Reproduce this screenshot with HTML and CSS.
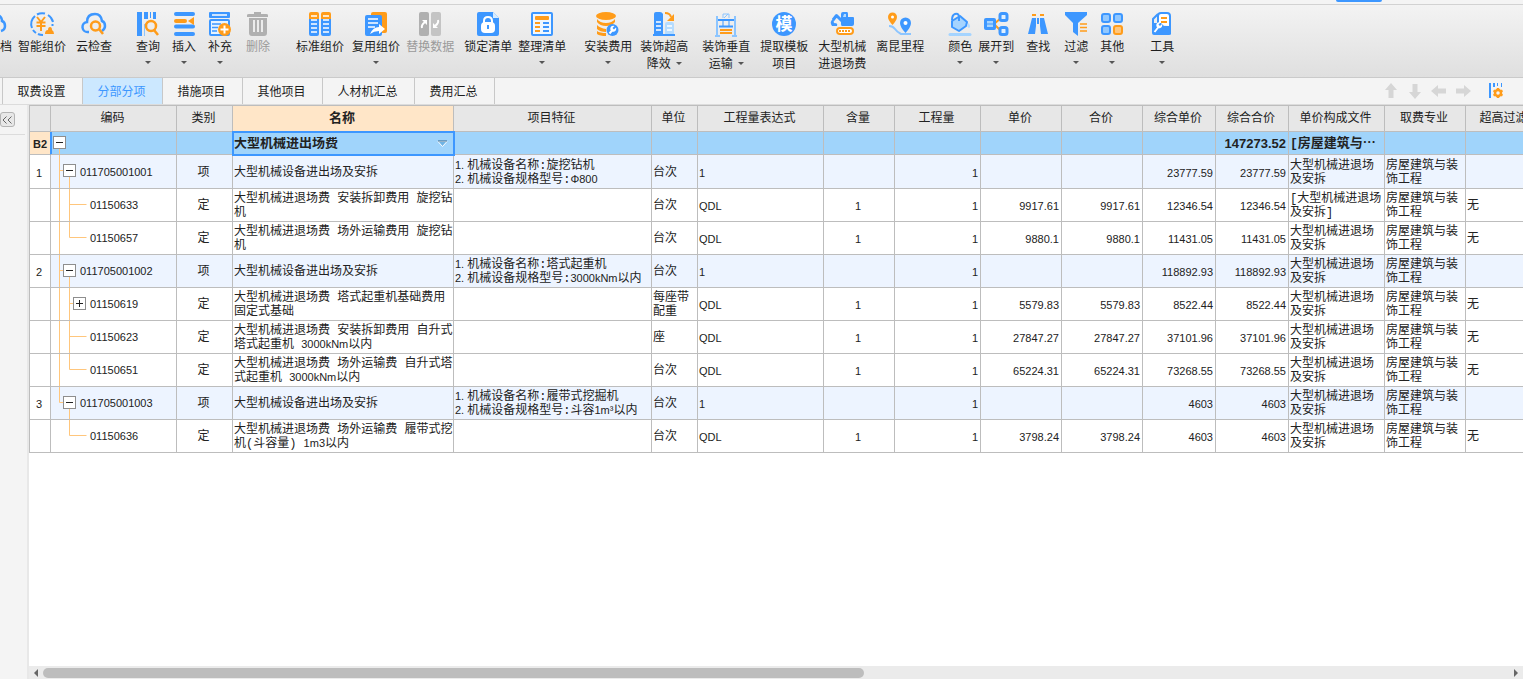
FILE: index.html
```html
<!DOCTYPE html>
<html lang="zh-CN">
<head>
<meta charset="utf-8">
<title>分部分项</title>
<link rel="stylesheet" href="styles.css">
</head>
<body>
<svg class="defs" aria-hidden="true">
  <defs>
    <g id="minus"><rect x=".5" y=".5" width="12" height="12" fill="#fff" stroke="#8e8e8e"/><path d="M3 6.5h7" stroke="#222"/></g>
    <g id="plus"><use href="#minus"/><path d="M6.500 3v7" stroke="#222"/></g>
    <g id="t-root"><path d="M8.500 16v30" class="twig"/><use href="#minus" x="2" y="4"/></g>
    <g id="t-item"><path d="M8.500 0v40M8.500 15.500h5M18.500 20v20" class="twig"/><use href="#minus" x="12" y="9"/></g>
    <g id="t-last"><path d="M8.500 0v15.500h5M18.500 20v20" class="twig"/><use href="#minus" x="12" y="9"/></g>
    <g id="t-mid"><path d="M8.500 0v40M18.500 0v40M18.500 15.500h17" class="twig"/></g>
    <g id="t-end"><path d="M8.500 0v40M18.500 0v15.500h17" class="twig"/></g>
    <g id="t-plus"><path d="M8.500 0v40M18.500 0v40M18.500 15.500h5" class="twig"/><use href="#plus" x="22" y="9"/></g>
    <g id="t-final"><path d="M18.500 0v15.500h17" class="twig"/></g>
  </defs>
</svg>

<div class="topstrip"><span class="pill"></span></div>

<div class="toolbar" role="toolbar">
  <button class="tool clip"><svg class="ico" viewBox="18 0 12 24"><path d="M16 3q4 2 4 6 3 1 3 5t-4 5" fill="none" stroke="#3d97ff" stroke-width="2.500"/></svg>档</button>
  <button class="tool s6"><svg class="ico" viewBox="0 0 24 24"><g fill="none" stroke="#3d97ff" stroke-width="2"><path d="M2 16A11 11 0 0 1 5 4M7 2.500A11 11 0 0 1 15 1.500M18 3a11 11 0 0 1 5 7M3 18a11 11 0 0 0 3 3M8 22q2 1 5 1M22.500 12v2"/></g><path d="M7 5l4 5 4-5M6.500 10.500h9M6.500 14h9M11 10v9" fill="none" stroke="#ff9c1a" stroke-width="2"/><path d="M15 22q0-4 3-4 0-3 2-3t2 3q2 1 2 4z" fill="#ff9c1a"/></svg>智能组价</button>
  <button class="tool s10"><svg class="ico" viewBox="0 0 24 24"><path d="M7 20H6a5 5 0 0 1-1-10q0-8 8-8 6 0 7 7 3 1 3 5 0 3-3 5" fill="none" stroke="#3d97ff" stroke-width="2.500"/><circle cx="13.500" cy="14" r="4.500" fill="none" stroke="#ff9c1a" stroke-width="2.500"/><path d="M17 17l4 5" stroke="#ff9c1a" stroke-width="2.500"/></svg>云检查</button>
  <button class="tool s24"><svg class="ico" viewBox="0 0 24 24"><path d="M1 0h5v24H1zM8 0h4v7H8zM14 0h1v6h-1zM17 0h3v7h-3z" fill="#3d97ff"/><path d="M9 12v12h-1V12z" fill="#8cc5ff"/><circle cx="15" cy="14" r="5" fill="none" stroke="#ff9c1a" stroke-width="2.500"/><path d="M18 18l4 5" stroke="#ff9c1a" stroke-width="2.500"/></svg>查询<i class="caret"></i></button>
  <button class="tool s12"><svg class="ico" viewBox="0 0 24 24"><path d="M4 2h17M4 14.500h17M4 22h17" stroke="#3d97ff" stroke-width="4" stroke-linecap="round"/><path d="M4 9h9" stroke="#ff9c1a" stroke-width="4" stroke-linecap="round"/><path d="M16 9l6-4v8z" fill="#ff9c1a"/></svg>插入<i class="caret"></i></button>
  <button class="tool s12"><svg class="ico" viewBox="0 0 24 24"><rect x="1" width="21" height="6" rx="1" fill="#3d97ff"/><path d="M4 3h15" stroke="#fff" stroke-width="1.500"/><rect x="2" y="8" width="19" height="15" rx="1" fill="#e6f3ff" stroke="#3d97ff" stroke-width="2"/><path d="M4 12h9M4 15.500h6M4 19h5" stroke="#3d97ff" stroke-width="1.500"/><circle cx="16.500" cy="17.500" r="6.500" fill="#ff9c1a"/><path d="M16.500 13.500v8M12.500 17.500h8" stroke="#fff" stroke-width="2"/></svg>补充<i class="caret"></i></button>
  <button class="tool s14" disabled><svg class="ico" viewBox="0 0 24 24"><path d="M1 5V3q0-1 2-1h5V0h7v2h5q2 0 2 1v2zM3 6h18v15q0 3-3 3H6q-3 0-3-3z" fill="#b0b0b0"/><path d="M8 8v12M12 8v12M16 8v12" stroke="#fff" stroke-width="1.500"/></svg>删除</button>

  <button class="tool s26"><svg class="ico" viewBox="0 0 24 24"><path d="M1 2q0-2 2-2h6q2 0 2 2v5H1zM13 2q0-2 2-2h6q2 0 2 2v5H13z" fill="#ff9c1a"/><path d="M1 7h10v15q0 2-2 2H3q-2 0-2-2zM13 7h10v15q0 2-2 2h-6q-2 0-2-2z" fill="#3d97ff"/><path d="M3 4h6M3 8h6M3 12h6M3 16h6M3 20h6M15 4h6M15 8h6M15 12h6M15 16h6M15 20h6" stroke="#fff" stroke-width="1.500"/></svg>标准组价</button>
  <button class="tool s8"><svg class="ico" viewBox="0 0 24 24"><rect x="7" width="16" height="21" rx="2" fill="#ff9c1a"/><rect x="1" y="3" width="17" height="21" rx="2" fill="#3d97ff"/><path d="M4 7h10M4 11h10M4 15h7" stroke="#fff" stroke-width="1.500"/><path d="M6 22q3-7 9-7v-3l6 5-6 5v-3q-5 0-9 3z" fill="#fff"/></svg>复用组价<i class="caret"></i></button>
  <button class="tool s6" disabled><svg class="ico" viewBox="0 0 24 24"><rect x="1" width="10" height="24" rx="2" fill="#b0b0b0"/><rect x="13" width="10" height="24" rx="2" fill="#c4c4c4"/><path d="M4 16q-1-3 3-6M20 8q1 3-3 6" fill="none" stroke="#fff" stroke-width="2"/><path d="M4 8h5v5zM15 11v5h5z" fill="#fff"/></svg>替换数据</button>
  <button class="tool s10"><svg class="ico" viewBox="0 0 24 24"><path d="M1 2q0-2 2-2h14l6 6v16q0 2-2 2H3q-2 0-2-2z" fill="#3d97ff"/><path d="M17 0l6 6h-6z" fill="#d7ecff"/><rect x="5" y="10" width="14" height="11" rx="4" fill="#fff"/><path d="M8 11V9q0-4 4-4t4 4v2" fill="none" stroke="#fff" stroke-width="2"/><path d="M12 13v4" stroke="#3d97ff" stroke-width="2"/></svg>锁定清单</button>
  <button class="tool s6"><svg class="ico" viewBox="0 0 24 24"><rect x="2" y="1" width="20" height="22" rx="1" fill="#eef7ff" stroke="#3d97ff" stroke-width="2"/><rect x="5" y="4" width="14" height="4" rx="1" fill="#ff9c1a"/><path d="M5 11h5M5 15h5M5 19h5" stroke="#ff9c1a" stroke-width="2"/><path d="M13 11h6M13 15h6M13 19h6" stroke="#3d97ff" stroke-width="2"/></svg>整理清单<i class="caret"></i></button>

  <button class="tool s18"><svg class="ico" viewBox="0 0 24 24"><ellipse cx="10" cy="4" rx="10" ry="4" fill="#ff9c1a"/><path d="M1 7q3 4 9 4t9-4v3q-3 4-9 4T1 10zM1 13q3 3 9 4v3q-6 0-9-3zM1 19q3 2 9 2v3q-6 0-9-2z" fill="#ff9c1a"/><circle cx="16.500" cy="18" r="6" fill="#3d97ff"/><path d="M13.500 21.500l3-3.500" stroke="#fff" stroke-width="2"/><path d="M20 15.500l-2 2-1.500-1.500 2-2a3 3 0 1 0 1.500 1.500z" fill="#fff"/></svg>安装费用<i class="caret"></i></button>
  <button class="tool s8"><svg class="ico" viewBox="0 0 24 24"><path d="M2 2q0-2 2-2h4q2 0 3 2v20H2z" fill="#3d97ff"/><path d="M4 10h5M4 14h5M4 18h5" stroke="#fff" stroke-width="1.500"/><path d="M13 12q0-2 2-2h5q2 0 2 2v10h-9z" fill="#b5dcff"/><path d="M15 14h5M15 18h5" stroke="#fff" stroke-width="1.500"/><path d="M1 23h22" stroke="#3d97ff" stroke-width="2"/><path d="M13 1q5 0 6 4" fill="none" stroke="#ff9c1a" stroke-width="2"/><path d="M22 2v7h-7z" fill="#ff9c1a"/></svg><span>装饰超高<br>降效<i class="caret side"></i></span></button>
  <button class="tool s14"><svg class="ico" viewBox="0 0 24 24"><path d="M3 4v19M21 4v19" fill="none" stroke="#8cc5ff" stroke-width="2"/><path d="M9 6V2h6v4M10 6l4-4" fill="none" stroke="#8cc5ff"/><path d="M4 8h16M5 14.500h14" stroke="#3d97ff" stroke-width="2"/><path d="M9 7v8M15 7v8" stroke="#3d97ff"/><path d="M6 18h12M6 21h12" stroke="#ff9c1a" stroke-width="2"/><path d="M1 24h5M18 24h5" stroke="#8cc5ff" stroke-width="2"/></svg><span>装饰垂直<br>运输<i class="caret side"></i></span></button>
  <button class="tool s10"><svg class="ico" viewBox="0 0 24 24"><circle cx="12" cy="12" r="12" fill="#3d97ff"/><text x="12" y="18" text-anchor="middle" class="mo">模</text></svg><span>提取模板<br>项目</span></button>
  <button class="tool s10"><svg class="ico" viewBox="0 0 24 24"><path d="M11 2q0-2 2-2h4q1 0 1 2v3h5q1 0 1 1v6q0 2-2 2H12q-1 0-1-2z" fill="#3d97ff"/><path d="M14 2h2v3h-3z" fill="#b5dcff"/><path d="M12 9L6.500 3.500 3 8" fill="none" stroke="#3d97ff" stroke-width="3" stroke-linejoin="round"/><path d="M3 7q-4 3-1 7h5q1-2-1-3-3 1-2-3z" fill="#3d97ff"/><rect x="7" y="16" width="16" height="6" rx="3" fill="#fff" stroke="#ff9c1a" stroke-width="2"/><path d="M9 19h12" stroke="#ff9c1a" stroke-width="2" stroke-dasharray="2 1"/></svg><span>大型机械<br>进退场费</span></button>
  <button class="tool s10"><svg class="ico" viewBox="0 0 24 24"><path d="M1 14q4 0 6 3t6 5q1 0 3 0h7" fill="none" stroke="#8cc5ff" stroke-width="2"/><path d="M4.500 13Q0 8 0 5a4.500 4.500 0 0 1 9 0q0 3-4.500 8z" fill="#ff9c1a"/><circle cx="4.500" cy="5" r="1.500" fill="#fff"/><path d="M17.500 21Q12 15 12 11a5.500 5.500 0 0 1 11 0q0 4-5.500 10z" fill="#3d97ff"/><circle cx="17.500" cy="11" r="2" fill="#fff"/></svg>离昆里程</button>

  <button class="tool s24"><svg class="ico" viewBox="0 0 24 24"><path d="M4 9l8-5 7 6-1 4-7 5-7-4z" fill="#a5d4ff" stroke="#3d97ff" stroke-width="2" stroke-linejoin="round"/><path d="M11 9V4q-1-3-4-2Q4 3 4 8" fill="none" stroke="#3d97ff" stroke-width="2"/><path d="M20.500 11q3 4 .5 5-3-1-.5-5z" fill="#b5dcff"/><path d="M2 22.500h20" stroke="#a5d4ff" stroke-width="3" stroke-linecap="round"/></svg>颜色<i class="caret"></i></button>
  <button class="tool s6"><svg class="ico" viewBox="0 0 24 24"><path d="M10 12l7-6M10 12l7 7" stroke="#ff9c1a" stroke-width="2"/><rect y="6" width="12" height="12" rx="2" fill="#3d97ff"/><rect x="3" y="9" width="6" height="6" fill="#a5d4ff"/><path d="M3 12h6" stroke="#3d97ff"/><rect x="16" y="1.500" width="7" height="7" rx="2" fill="#e0f0ff" stroke="#3d97ff" stroke-width="3"/><rect x="16" y="15.500" width="7" height="7" rx="2" fill="#e0f0ff" stroke="#3d97ff" stroke-width="3"/></svg>展开到<i class="caret"></i></button>
  <button class="tool s12"><svg class="ico" viewBox="0 0 24 24"><path d="M6 3h4M14 3h4" stroke="#ff9c1a" stroke-width="2"/><path d="M6 6h4v8l-1 8H2l3-12zM14 6h4l1 4 3 12h-7l-1-8z" fill="#3d97ff"/><path d="M11 6h2v6h-2z" fill="#3d97ff"/></svg>查找</button>
  <button class="tool s14"><svg class="ico" viewBox="0 0 24 24"><path d="M1 0h22v3l-9 8v13l-5-4v-9L1 3z" fill="#3d97ff"/><path d="M16 12h7M16 15.500h7M16 19h7" stroke="#ff9c1a" stroke-width="1.500"/></svg>过滤<i class="caret"></i></button>
  <button class="tool s12"><svg class="ico" viewBox="0 0 24 24"><g fill="#91c8ff" stroke="#3d97ff" stroke-width="2"><rect x="2" y="2" width="8" height="8" rx="2"/><rect x="14" y="2" width="8" height="8" rx="2"/><rect x="2" y="14" width="8" height="8" rx="2"/></g><rect x="14" y="14" width="8" height="8" rx="2" fill="#ffc67c" stroke="#ff9c1a" stroke-width="2"/></svg>其他<i class="caret"></i></button>
  <button class="tool s26"><svg class="ico" viewBox="0 0 24 24"><path d="M3 12V7l5-5" stroke="#3d97ff" stroke-width="2" fill="none"/><path d="M8 12V4q0-3 3-3h6q3 0 3 3v10" fill="#fff" stroke="#3d97ff" stroke-width="2"/><path d="M11 6h6M11 10h6" stroke="#ff9c1a" stroke-width="2"/><path d="M2 11h9l3 3h7v8q0 1-2 1H4q-2 0-2-2z" fill="#3d97ff"/><path d="M4.500 20l4-5" stroke="#fff" stroke-width="2"/><path d="M12 12l-2 2-1.500-1.500 2-2a3 3 0 1 0 1.500 1.500z" fill="#fff"/></svg>工具<i class="caret"></i></button>
</div>

<nav class="tabs">
  <button class="tab">取费设置</button><button class="tab active">分部分项</button><button class="tab">措施项目</button><button class="tab">其他项目</button><button class="tab wide">人材机汇总</button><button class="tab">费用汇总</button>
  <div class="moves">
    <button aria-label="上移"><svg width="16" height="16"><path d="M8 0l6 7h-3.500v8h-5V7H2z" fill="#d6d6d6"/></svg></button>
    <button aria-label="下移"><svg width="16" height="16"><path d="M8 16l6-7h-3.500V1h-5v8H2z" fill="#d6d6d6"/></svg></button>
    <button aria-label="左移"><svg width="16" height="16"><path d="M0 8l7-6v3.500h8v5H7V14z" fill="#d6d6d6"/></svg></button>
    <button aria-label="右移"><svg width="16" height="16"><path d="M16 8L9 2v3.500H1v5h8V14z" fill="#d6d6d6"/></svg></button>
    <button class="colset" aria-label="列设置"><svg width="16" height="16"><path d="M1 0h2v15H1zM5 0h2v4H5zM9 0h1v3H9zM13 0h1v4h-1z" fill="#3d97ff"/><circle cx="10" cy="10" r="3" fill="none" stroke="#ff9c1a" stroke-width="2.500"/><path d="M10 5v2M10 13v2M5.500 7.500l2 1M12.500 11.500l2 1M14.500 7.500l-2 1M7.500 11.500l-2 1" stroke="#ff9c1a" stroke-width="2.500"/></svg></button>
  </div>
</nav>

<main class="work">
  <aside class="side-panel"><div class="fold-row"><button class="fold" aria-label="展开侧栏"><svg width="12" height="12"><path d="M5.500 2.500L2 6l3.500 3.500M10.500 2.500L7 6l3.500 3.500" fill="none" stroke="#666"/></svg></button></div></aside>
  <section class="pane">
    <div class="grid">
      <table>
        <colgroup><col class="c21"><col class="c126"><col class="c56"><col class="c221"><col class="c198"><col class="c46"><col class="c126"><col class="c71"><col class="c86"><col class="c81"><col class="c81"><col class="c73"><col class="c73"><col class="c96"><col class="c81"><col class="c102"></colgroup>
        <thead><tr><th></th><th>编码</th><th>类别</th><th class="cur">名称</th><th>项目特征</th><th>单位</th><th>工程量表达式</th><th>含量</th><th>工程量</th><th>单价</th><th>合价</th><th>综合单价</th><th>综合合价</th><th>单价构成文件</th><th>取费专业</th><th>超高过滤类别</th></tr></thead>
        <tbody>
          <tr class="root"><td class="mid rowmark"><b class="n">B2</b></td><td class="code"><div><button class="toggle" aria-label="折叠"><svg class="tree"><use href="#t-root"/></svg></button></div></td><td></td><td class="picked"><div class="combo"><select aria-label="名称"><option>大型机械进出场费</option></select><svg width="11" height="8"><path d="M1 1.500h9L5.500 6.500z" fill="#6fb3e4" stroke="#fff"/><path d="M1 1h9" stroke="#2f6690"/></svg></div></td><td></td><td></td><td></td><td></td><td></td><td></td><td></td><td></td><td class="num">147273.52</td><td>[房屋建筑与⋯</td><td></td><td></td></tr>
          <tr class="item tall"><td class="mid n">1</td><td class="code n"><div><button class="toggle" aria-label="折叠"><svg class="tree"><use href="#t-item"/></svg></button>011705001001</div></td><td class="mid">项</td><td>大型机械设备进出场及安拆</td><td><span class="n">1. </span>机械设备名称:旋挖钻机<br><span class="n">2. </span>机械设备规格型号:<span class="n">Φ800</span></td><td>台次</td><td class="n">1</td><td></td><td class="num">1</td><td></td><td></td><td class="num">23777.59</td><td class="num">23777.59</td><td>大型机械进退场<br>及安拆</td><td>房屋建筑与装<br>饰工程</td><td></td></tr>
          <tr><td></td><td class="code n"><div><svg class="tree deep"><use href="#t-mid"/></svg>01150633</div></td><td class="mid">定</td><td>大型机械进退场费 安装拆卸费用 旋挖钻<br>机</td><td></td><td>台次</td><td class="n">QDL</td><td class="mid n">1</td><td class="num">1</td><td class="num">9917.61</td><td class="num">9917.61</td><td class="num">12346.54</td><td class="num">12346.54</td><td>[大型机械进退场<br>及安拆]</td><td>房屋建筑与装<br>饰工程</td><td>无</td></tr>
          <tr><td></td><td class="code n"><div><svg class="tree deep"><use href="#t-end"/></svg>01150657</div></td><td class="mid">定</td><td>大型机械进退场费 场外运输费用 旋挖钻<br>机</td><td></td><td>台次</td><td class="n">QDL</td><td class="mid n">1</td><td class="num">1</td><td class="num">9880.1</td><td class="num">9880.1</td><td class="num">11431.05</td><td class="num">11431.05</td><td>大型机械进退场<br>及安拆</td><td>房屋建筑与装<br>饰工程</td><td>无</td></tr>
          <tr class="item"><td class="mid n">2</td><td class="code n"><div><button class="toggle" aria-label="折叠"><svg class="tree"><use href="#t-item"/></svg></button>011705001002</div></td><td class="mid">项</td><td>大型机械设备进出场及安拆</td><td><span class="n">1. </span>机械设备名称:塔式起重机<br><span class="n">2. </span>机械设备规格型号:<span class="n">3000kNm</span>以内</td><td>台次</td><td class="n">1</td><td></td><td class="num">1</td><td></td><td></td><td class="num">118892.93</td><td class="num">118892.93</td><td>大型机械进退场<br>及安拆</td><td>房屋建筑与装<br>饰工程</td><td></td></tr>
          <tr><td></td><td class="code n"><div><button class="toggle" aria-label="展开"><svg class="tree deep"><use href="#t-plus"/></svg></button>01150619</div></td><td class="mid">定</td><td>大型机械进退场费 塔式起重机基础费用<br>固定式基础</td><td></td><td>每座带<br>配重</td><td class="n">QDL</td><td class="mid n">1</td><td class="num">1</td><td class="num">5579.83</td><td class="num">5579.83</td><td class="num">8522.44</td><td class="num">8522.44</td><td>大型机械进退场<br>及安拆</td><td>房屋建筑与装<br>饰工程</td><td>无</td></tr>
          <tr><td></td><td class="code n"><div><svg class="tree deep"><use href="#t-mid"/></svg>01150623</div></td><td class="mid">定</td><td>大型机械进退场费 安装拆卸费用 自升式<br>塔式起重机 <span class="n">3000kNm</span>以内</td><td></td><td>座</td><td class="n">QDL</td><td class="mid n">1</td><td class="num">1</td><td class="num">27847.27</td><td class="num">27847.27</td><td class="num">37101.96</td><td class="num">37101.96</td><td>大型机械进退场<br>及安拆</td><td>房屋建筑与装<br>饰工程</td><td>无</td></tr>
          <tr><td></td><td class="code n"><div><svg class="tree deep"><use href="#t-end"/></svg>01150651</div></td><td class="mid">定</td><td>大型机械进退场费 场外运输费 自升式塔<br>式起重机 <span class="n">3000kNm</span>以内</td><td></td><td>台次</td><td class="n">QDL</td><td class="mid n">1</td><td class="num">1</td><td class="num">65224.31</td><td class="num">65224.31</td><td class="num">73268.55</td><td class="num">73268.55</td><td>大型机械进退场<br>及安拆</td><td>房屋建筑与装<br>饰工程</td><td>无</td></tr>
          <tr class="item"><td class="mid n">3</td><td class="code n"><div><button class="toggle" aria-label="折叠"><svg class="tree"><use href="#t-last"/></svg></button>011705001003</div></td><td class="mid">项</td><td>大型机械设备进出场及安拆</td><td><span class="n">1. </span>机械设备名称:履带式挖掘机<br><span class="n">2. </span>机械设备规格型号:斗容<span class="n">1m³</span>以内</td><td>台次</td><td class="n">1</td><td></td><td class="num">1</td><td></td><td></td><td class="num">4603</td><td class="num">4603</td><td>大型机械进退场<br>及安拆</td><td>房屋建筑与装<br>饰工程</td><td></td></tr>
          <tr><td></td><td class="code n"><div><svg class="tree deep"><use href="#t-final"/></svg>01150636</div></td><td class="mid">定</td><td>大型机械进退场费 场外运输费 履带式挖<br>机(斗容量) <span class="n">1m3</span>以内</td><td></td><td>台次</td><td class="n">QDL</td><td class="mid n">1</td><td class="num">1</td><td class="num">3798.24</td><td class="num">3798.24</td><td class="num">4603</td><td class="num">4603</td><td>大型机械进退场<br>及安拆</td><td>房屋建筑与装<br>饰工程</td><td>无</td></tr>
        </tbody>
      </table>
    </div>
    <div class="hscroll">
      <svg width="6" height="10"><path d="M5 1v8L1 5z" fill="#666"/></svg>
      <div class="track"><div class="thumb"></div></div>
      <svg width="6" height="10"><path d="M1 1v8l4-4z" fill="#666"/></svg>
    </div>
  </section>
</main>
</body>
</html>
```
FILE: styles.css
```css
* { box-sizing: border-box; }
html, body { height: 100%; }
body {
  margin: 0;
  display: flex;
  flex-direction: column;
  overflow: hidden;
  background: #f4f4f4;
  color: #1e1e1e;
  font: 12px/16px "Liberation Sans", "Noto Sans CJK SC", sans-serif;
}
button { border: 0; padding: 0; margin: 0; background: none; color: inherit; font: inherit; }
svg { display: block; flex: none; }
.defs { position: absolute; width: 0; height: 0; }
.twig { fill: none; stroke: #ffc67c; }

.topstrip { flex: none; height: 5px; border-bottom: 1px solid #d2d2d2; display: flex; justify-content: flex-end; padding-right: 141px; }
.pill { width: 46px; height: 2px; background: #3d97ff; border-radius: 0 0 4px 4px; }

.toolbar {
  flex: none;
  display: flex;
  align-items: flex-start;
  height: 73px;
  padding-top: 7px;
  background: linear-gradient(#f3f3f3, #dfdfdf);
  border-bottom: 1px solid #cacaca;
  white-space: nowrap;
}
.tool { flex: none; display: flex; flex-direction: column; align-items: center; line-height: 17px; }
.tool:disabled { color: #9a9a9a; }
.ico { width: 24px; height: 24px; margin-bottom: 3px; overflow: visible; }
.clip { overflow: hidden; width: 12px; }
.clip .ico { width: 12px; }
.mo { font: bold 17px "Noto Sans CJK SC", sans-serif; fill: #fff; }
.caret { width: 0; height: 0; border: 3px solid transparent; border-top-color: #555; border-bottom: 0; margin-top: 5px; }
.caret.side { display: inline-block; margin: 0 0 3px 5px; }
.s6 { margin-left: 6px; }
.s8 { margin-left: 8px; }
.s10 { margin-left: 10px; }
.s12 { margin-left: 12px; }
.s14 { margin-left: 14px; }
.s18 { margin-left: 18px; }
.s24 { margin-left: 24px; }
.s26 { margin-left: 26px; }

.tabs { flex: none; display: flex; height: 27px; padding-left: 2px; border-bottom: 1px solid #dcdcdc; }
.tab { width: 80px; border-left: 1px solid #c8c8c8; padding: 2px 2px 0 0; }
.tab.wide { width: 92px; }
.tab:nth-child(6) { width: 81px; border-right: 1px solid #c8c8c8; }
.tab.active { background: #cce8ff; color: #3d97ff; }
.moves { margin-left: auto; display: flex; align-items: center; gap: 8px; padding-right: 19px; }
.colset { margin-left: 9px; }

.work { flex: 1; display: flex; min-height: 0; }
.side-panel { flex: none; width: 29px; border-right: 2px solid #e8e8e8; }
.fold-row { width: 25px; height: 30px; padding-top: 7px; border-bottom: 1px solid #dcdcdc; }
.fold { width: 15px; height: 15px; border: 1px solid #b4b4b4; border-radius: 3px; background: #e8e8e8; }
.pane { flex: 1; min-width: 0; display: flex; flex-direction: column; background: #fff; }
.grid { flex: 1; min-height: 0; overflow: hidden; }

table {
  table-layout: fixed;
  width: 1519px;
  border-collapse: separate;
  border-spacing: 0;
  border-left: 1px solid #bdbdbd;
  border-top: 1px solid #bdbdbd;
  font: 12px/14px "Liberation Mono", "Noto Sans CJK SC", monospace;
  color: #222;
}
.c21 { width: 21px; } .c46 { width: 46px; } .c56 { width: 56px; } .c71 { width: 71px; }
.c73 { width: 73px; } .c81 { width: 81px; } .c86 { width: 86px; } .c96 { width: 96px; }
.c102 { width: 102px; } .c126 { width: 126px; } .c198 { width: 198px; } .c221 { width: 221px; }
th, td {
  padding: 2px 0 0 1px;
  border-right: 1px solid #bdbdbd;
  border-bottom: 1px solid #bdbdbd;
  white-space: nowrap;
  overflow: hidden;
}
th { height: 26px; padding: 1px 2px 0 0; background: #e7e7e7; font-weight: normal; text-align: center; }
th.cur { background: #ffe6c8; font-weight: bold; font-size: 13px; }
td { height: 33px; text-align: left; }
.tall td { height: 34px; }
.root td { height: 23px; background: #a0d4fb; font-weight: bold; font-size: 13px; }
.item td { background: #edf4ff; }
.item td:first-child { background: #fff; }
td.mid { text-align: center; padding: 2px 2px 0 0; }
.n, .num { font-family: "Liberation Sans", sans-serif; font-size: 11px; }
span.n { line-height: 11px; }
td.num { text-align: right; padding-right: 2px; }
.root td.rowmark { background: #ffe6c8; padding-right: 0; }
.code > div { display: flex; align-items: center; }
td.code { padding: 0; }
.tree { width: 29px; height: 32px; }
.tree.deep { width: 39px; }
.tall .tree { height: 33px; }
.root .tree { height: 22px; }
.root td.code { box-shadow: inset 1px 0 #3d97ff; }
.root td.rowmark { border-right-color: #3d97ff; }
.root td.picked { position: relative; outline: 2px solid #3d97ff; outline-offset: -1px; overflow: visible; }
.combo { display: flex; align-items: center; padding-right: 5px; }
.combo select { flex: 1; min-width: 0; appearance: none; border: 0; padding: 0; margin: 0; background: none; color: inherit; font: inherit; height: 18px; }

.hscroll { flex: none; display: flex; align-items: center; gap: 4px; height: 13px; padding: 0 4px; background: #ebebeb; }
.track { flex: 1; }
.thumb { width: 56%; height: 10px; border-radius: 5px; background: #bdbdbd; }
```
